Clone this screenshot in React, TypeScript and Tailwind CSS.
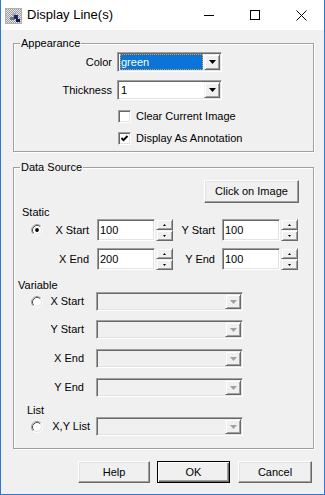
import React from "react";

const SUNKEN =
  "border border-t-[#a0a0a0] border-l-[#a0a0a0] border-r-white border-b-white shadow-[inset_1px_1px_0_#696969,inset_-1px_-1px_0_#e3e3e3]";
const ARROWBTN =
  "border border-t-[#f0f0f0] border-l-[#f0f0f0] border-r-[#696969] border-b-[#696969] shadow-[inset_1px_1px_0_white,inset_-1px_-1px_0_#a0a0a0] bg-[#f0f0f0] flex items-center justify-center";
const PUSH =
  "h-[22px] flex items-center justify-center bg-[#f0f0f0] border border-t-white border-l-white border-r-[#696969] border-b-[#696969] shadow-[inset_-1px_-1px_0_#a0a0a0,inset_1px_1px_0_#e3e3e3]";
const PUSH_DEFAULT =
  "h-[22px] flex items-center justify-center bg-[#f0f0f0] border border-black shadow-[inset_1px_1px_0_white,inset_-1px_-1px_0_#696969,inset_-2px_-2px_0_#a0a0a0]";
const GROUP =
  "relative border border-[#a0a0a0] shadow-[inset_1px_1px_0_white,1px_1px_0_white]";

function DownTri({ color = "black", w = 7, h = 4 }: { color?: string; w?: number; h?: number }) {
  return (
    <svg width={w} height={h} viewBox={`0 0 ${w} ${h}`}>
      <polygon points={`0,0 ${w},0 ${w / 2},${h}`} fill={color} />
    </svg>
  );
}

function UpTri({ w = 5, h = 3 }: { w?: number; h?: number }) {
  return (
    <svg width={w} height={h} viewBox={`0 0 ${w} ${h}`}>
      <polygon points={`0,${h} ${w},${h} ${w / 2},0`} fill="black" />
    </svg>
  );
}

function Radio({ checked }: { checked?: boolean }) {
  return (
    <svg width="12" height="12" viewBox="0 0 12 12" className="shrink-0">
      <circle cx="6" cy="6" r="4.5" fill="white" />
      <path d="M2.11 9.89 A5.5 5.5 0 0 1 9.89 2.11" stroke="#a0a0a0" fill="none" />
      <path d="M2.82 9.18 A4.5 4.5 0 0 1 9.18 2.82" stroke="#505050" fill="none" />
      <path d="M9.89 2.11 A5.5 5.5 0 0 1 2.11 9.89" stroke="white" fill="none" />
      <path d="M9.18 2.82 A4.5 4.5 0 0 1 2.82 9.18" stroke="#e3e3e3" fill="none" />
      {checked && <circle cx="6" cy="6" r="1.9" fill="black" />}
    </svg>
  );
}

function Check({ checked }: { checked?: boolean }) {
  return (
    <div className={`w-[13px] h-[13px] bg-white shrink-0 flex items-center justify-center ${SUNKEN}`}>
      {checked && (
        <svg width="9" height="9" viewBox="0 0 9 9">
          <polyline points="1.5,4 3.5,6.2 7.5,2" stroke="black" strokeWidth="1.9" fill="none" />
        </svg>
      )}
    </div>
  );
}

function Spin() {
  return (
    <div className="flex flex-col w-[17px] h-[22px] ml-[1px]">
      <div className={`h-[11px] ${ARROWBTN}`}>
        <UpTri w={3} h={2} />
      </div>
      <div className={`h-[11px] ${ARROWBTN}`}>
        <DownTri w={3} h={2} />
      </div>
    </div>
  );
}

function NumField({ value }: { value: string }) {
  return (
    <div className={`w-[58px] h-[22px] bg-white flex items-center pl-[2px] ${SUNKEN}`}>{value}</div>
  );
}

function DisabledCombo() {
  return (
    <div className={`w-[147px] h-[19px] ml-[12px] p-[1px] flex bg-[#f0f0f0] ${SUNKEN}`}>
      <div className="flex-1" />
      <div className={`w-[16px] ${ARROWBTN}`}>
        <DownTri color="#a0a0a0" />
      </div>
    </div>
  );
}

export default function App() {
  return (
    <div
      className="w-[325px] h-[495px] flex flex-col border-l border-r border-b border-[#2b79d0] bg-[#f0f0f0] text-[11px] leading-[13px] text-black overflow-hidden"
      style={{ fontFamily: '"Liberation Sans", Arial, sans-serif' }}
    >
      {/* Title bar */}
      <div className="h-[30px] bg-white flex items-center shrink-0">
        <svg width="17" height="16" viewBox="0 0 17 16" className="ml-[4px] mt-[1px]">
          <defs>
            <pattern id="chk" width="2" height="2" patternUnits="userSpaceOnUse">
              <rect width="2" height="2" fill="#e6e6e6" />
              <rect width="1" height="1" fill="#9c9c9c" />
              <rect x="1" y="1" width="1" height="1" fill="#9c9c9c" />
            </pattern>
          </defs>
          <rect x="0.5" y="0.5" width="16" height="15" fill="url(#chk)" stroke="#b0b0b0" />
          <rect x="7" y="5" width="4" height="3" fill="#a0a8c8" />
          <rect x="9" y="7" width="4" height="4" fill="#1c2668" />
          <rect x="5" y="9" width="4" height="3" fill="#6a72a0" />
          <rect x="11" y="11" width="4" height="3" fill="#101a50" />
        </svg>
        <div className="ml-[5px] text-[13px] leading-[16px]">Display Line(s)</div>
        <div className="flex-1" />
        <div className="w-[46px] h-[30px] flex items-center justify-center">
          <div className="w-[10px] h-px bg-black" />
        </div>
        <div className="w-[46px] h-[30px] flex items-center justify-center">
          <div className="w-[10px] h-[10px] border border-black" />
        </div>
        <div className="w-[46px] h-[30px] flex items-center justify-center">
          <svg width="11" height="11" viewBox="0 0 11 11">
            <path d="M0.5 0.5 L10.5 10.5 M10.5 0.5 L0.5 10.5" stroke="black" strokeWidth="1" />
          </svg>
        </div>
      </div>

      {/* Appearance */}
      <div className={`ml-[12px] w-[301px] mt-[13px] ${GROUP} pt-[8px] pb-[6px]`}>
        <div className="absolute left-[6px] top-[-7px] px-[1px] bg-[#f0f0f0]">Appearance</div>
        <div className="flex items-center h-[20px]">
          <div className="w-[98px] text-right">Color</div>
          <div className={`ml-[5px] w-[105px] h-[20px] p-[1px] flex bg-white ${SUNKEN}`}>
            <div className="flex-1 flex items-center pl-[1px] pr-[1px]">
              <div className="w-full h-[16px] bg-[#0a74d8] text-white flex items-center pl-[1px] outline-1 outline-dotted outline-offset-[-1px] outline-[#e0a040]">
                green
              </div>
            </div>
            <div className={`w-[16px] ${ARROWBTN}`}>
              <DownTri />
            </div>
          </div>
        </div>
        <div className="flex items-center h-[20px] mt-[8px]">
          <div className="w-[98px] text-right">Thickness</div>
          <div className={`ml-[5px] w-[105px] h-[20px] p-[1px] flex bg-white ${SUNKEN}`}>
            <div className="flex-1 flex items-center pl-[2px]">1</div>
            <div className={`w-[16px] ${ARROWBTN}`}>
              <DownTri />
            </div>
          </div>
        </div>
        <div className="flex items-center h-[13px] mt-[10px] pl-[104px]">
          <Check />
          <div className="ml-[5px]">Clear Current Image</div>
        </div>
        <div className="flex items-center h-[13px] mt-[9px] pl-[104px]">
          <Check checked />
          <div className="ml-[5px]">Display As Annotation</div>
        </div>
      </div>

      {/* Data Source */}
      <div className={`ml-[12px] w-[301px] mt-[15px] ${GROUP} pt-[12px] pb-[12px]`}>
        <div className="absolute left-[6px] top-[-7px] px-[1px] bg-[#f0f0f0]">Data Source</div>
        <div className="flex justify-end pr-[14px]">
          <div className={`w-[95px] h-[23px] ${PUSH}`}>Click on Image</div>
        </div>
        <div className="mt-[3px] pl-[8px] h-[13px]">Static</div>
        <div className="flex items-center h-[22px] pl-[17px]">
          <Radio checked />
          <div className="w-[46px] text-right">X Start</div>
          <div className="ml-[8px]">
            <NumField value="100" />
          </div>
          <Spin />
          <div className="w-[42px] text-right">Y Start</div>
          <div className="ml-[7px]">
            <NumField value="100" />
          </div>
          <Spin />
        </div>
        <div className="flex items-center h-[22px] mt-[7px] pl-[17px]">
          <div className="w-[12px]" />
          <div className="w-[46px] text-right">X End</div>
          <div className="ml-[8px]">
            <NumField value="200" />
          </div>
          <Spin />
          <div className="w-[42px] text-right">Y End</div>
          <div className="ml-[7px]">
            <NumField value="100" />
          </div>
          <Spin />
        </div>

        <div className="mt-[9px] pl-[4px] h-[13px]">Variable</div>
        <div className="flex items-center h-[19px] pl-[17px]">
          <Radio />
          <div className="w-[41px] text-right">X Start</div>
          <DisabledCombo />
        </div>
        <div className="flex items-center h-[19px] mt-[9px] pl-[17px]">
          <div className="w-[12px]" />
          <div className="w-[41px] text-right">Y Start</div>
          <DisabledCombo />
        </div>
        <div className="flex items-center h-[19px] mt-[10px] pl-[17px]">
          <div className="w-[12px]" />
          <div className="w-[41px] text-right">X End</div>
          <DisabledCombo />
        </div>
        <div className="flex items-center h-[19px] mt-[10px] pl-[17px]">
          <div className="w-[12px]" />
          <div className="w-[41px] text-right">Y End</div>
          <DisabledCombo />
        </div>

        <div className="mt-[7px] pl-[13px] h-[13px]">List</div>
        <div className="flex items-center h-[19px] pl-[17px]">
          <Radio />
          <div className="w-[47px] text-right">X,Y List</div>
          <div className={`w-[147px] h-[19px] ml-[6px] p-[1px] flex bg-[#f0f0f0] ${SUNKEN}`}>
            <div className="flex-1" />
            <div className={`w-[16px] ${ARROWBTN}`}>
              <DownTri color="#a0a0a0" />
            </div>
          </div>
        </div>
      </div>

      {/* Buttons */}
      <div className="flex mt-[12px] pl-[77px]">
        <div className={`w-[72px] ${PUSH}`}>Help</div>
        <div className={`w-[73px] ml-[7px] ${PUSH_DEFAULT}`}>OK</div>
        <div className={`w-[74px] ml-[8px] ${PUSH}`}>Cancel</div>
      </div>
    </div>
  );
}
